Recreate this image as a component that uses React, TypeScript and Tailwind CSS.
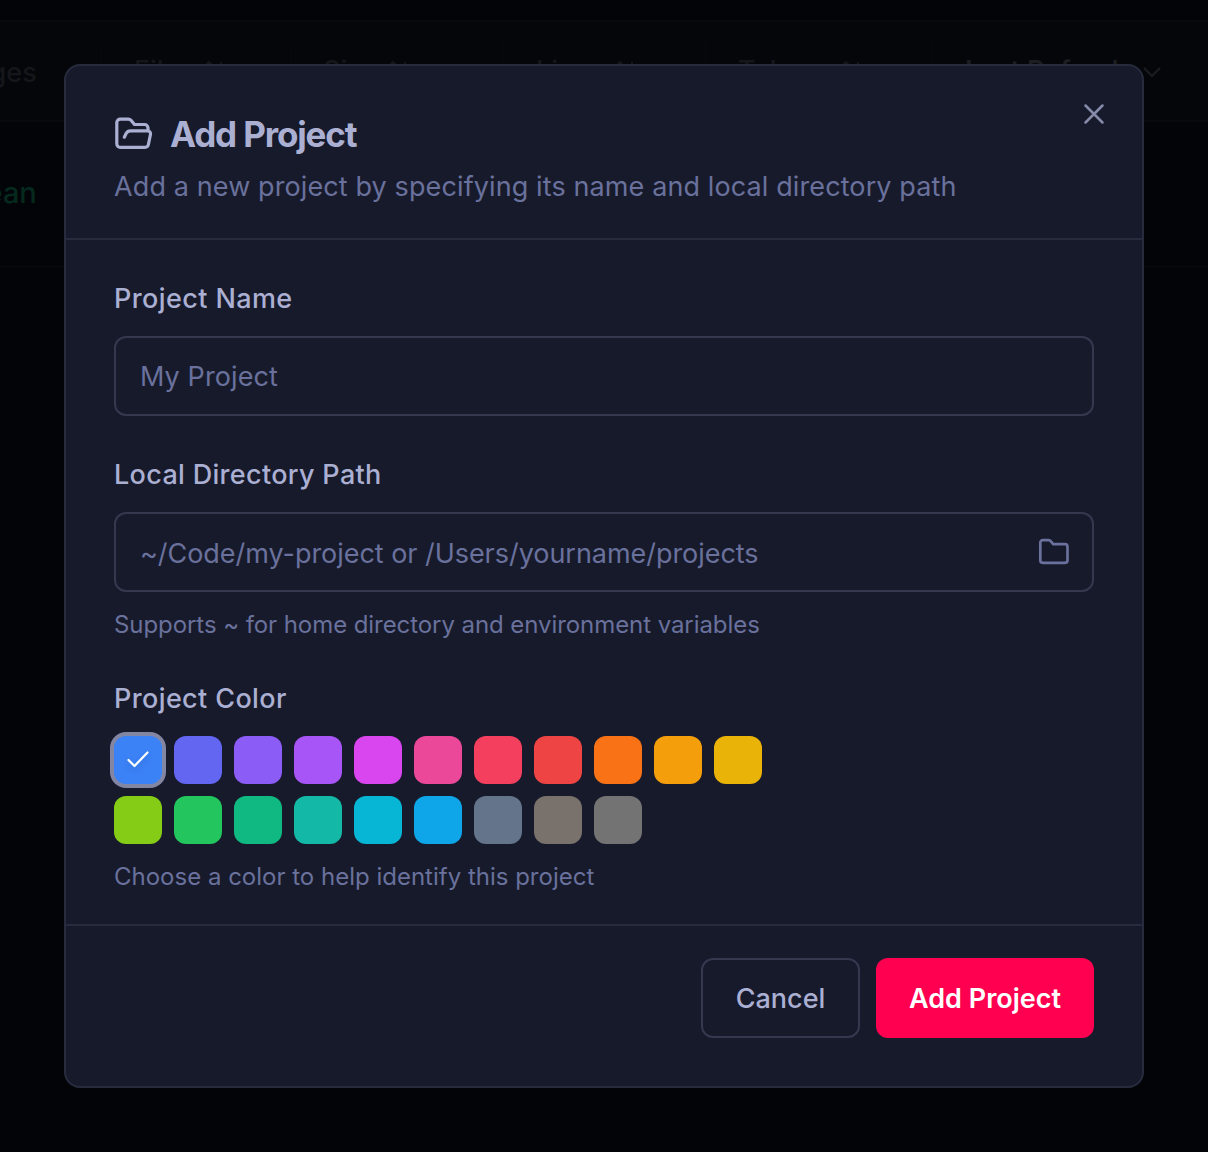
import React, { useState } from "react";

const COLORS = [
  "#3b82f6", "#6366f1", "#8b5cf6", "#a855f7", "#d946ef", "#ec4899", "#f43f5e",
  "#ef4444", "#f97316", "#f59e0b", "#eab308", "#84cc16", "#22c55e", "#10b981",
  "#14b8a6", "#06b6d4", "#0ea5e9", "#64748b", "#78716c", "#737373",
];

function FolderOpenIcon() {
  return (
    <svg width="40" height="36" viewBox="0 0 40 36" fill="none" stroke="currentColor" strokeWidth="3.2" strokeLinecap="round" strokeLinejoin="round">
      <path d="M34 15V12A3.500 3.500 0 0 0 30.500 8.500H20.500L17 4.300A3.500 3.500 0 0 0 14.300 3.100H6.300A3.500 3.500 0 0 0 2.800 6.600V27.800A3.500 3.500 0 0 0 6.300 31.300H31A3.500 3.500 0 0 0 34.400 28.500L36.500 18.200A2.700 2.700 0 0 0 33.800 14.900H16.700A5 5 0 0 0 12.100 17.500L10.300 21.200" />
    </svg>
  );
}

function FolderIcon() {
  return (
    <svg width="32" height="28" viewBox="0 0 32 28" fill="none" stroke="currentColor" strokeWidth="2.7" strokeLinejoin="round">
      <path d="M2.300 4.500A2.300 2.300 0 0 1 4.600 2.200H10.500A3 3 0 0 1 12.900 3.300L15.200 6.200H27A2.500 2.500 0 0 1 29.500 8.700V22.300A2.500 2.500 0 0 1 27 24.800H4.800A2.500 2.500 0 0 1 2.300 22.300Z" />
    </svg>
  );
}

function HeaderCell({ label, className }: { label: string; className: string }) {
  return (
    <div className={`flex h-[60px] items-center gap-2.5 border-l border-[#07080b] pl-8 text-[27px] font-medium text-[#15161b] ${className}`}>
      <span className="whitespace-nowrap">{label}</span>
      <svg className="shrink-0" width="20" height="22" viewBox="0 0 20 22" fill="none" stroke="currentColor" strokeWidth="2">
        <path d="M1 6L5 2L9 6M5 2V20M17 2V20M13 16L17 20" />
      </svg>
    </div>
  );
}

function Backdrop() {
  return (
    <div className="h-[1152px] w-[1208px] overflow-hidden bg-[#030408]">
      <div className="h-5" />
      <div className="flex h-[102px] items-center border-y-2 border-[#08090c] bg-[#050609]">
        <div className="flex w-[101px] justify-start text-[27px] font-medium text-[#15161b]">
          <span className="-ml-[78px] mt-1">Changes</span>
        </div>
        <HeaderCell label="Files" className="w-[189px]" />
        <HeaderCell label="Size" className="w-[213px]" />
        <HeaderCell label="Lines" className="w-[202px]" />
        <HeaderCell label="Tokens" className="w-[227px]" />
        <div className="flex h-[60px] flex-1 items-center border-l border-[#07080b] pl-8 text-[27px] font-semibold text-[#1c1d21]">
          <span className="w-[178px] whitespace-nowrap">Last Refresh</span>
          <svg className="mt-0.5 shrink-0" width="18" height="12" viewBox="0 0 18 12" fill="none" stroke="currentColor" strokeWidth="2.2">
            <path d="M1 2L9 10L17 2" />
          </svg>
        </div>
      </div>
      <div className="flex h-[145px] items-center border-b border-[#090a0e] text-[29px] font-medium text-[#06291e]">
        <span className="-ml-[43px] -mt-0.5">Clean</span>
      </div>
    </div>
  );
}

export default function App() {
  const [selected, setSelected] = useState(0);
  return (
    <div className="relative h-[1152px] w-[1208px] overflow-hidden font-['Inter',sans-serif]">
      <Backdrop />
      <div className="absolute inset-0 flex items-center justify-center">
        <div role="dialog" className="relative flex h-[1024px] w-[1080px] flex-col rounded-2xl border-2 border-[#282b3d] bg-[#171a2b] text-[#abb0d3]">
          <header className="h-[174px] shrink-0 border-b-2 border-[#282b3d] px-12 pt-[46px]">
            <div className="flex h-11 items-center gap-4">
              <FolderOpenIcon />
              <h2 className="text-[35px] font-bold leading-[44px] tracking-[-1.15px]">Add Project</h2>
            </div>
            <p className="mt-[11px] whitespace-nowrap text-[27px] leading-10 tracking-[0.11px] text-[#69719c]">Add a new project by specifying its name and local directory path</p>
          </header>
          <button aria-label="Close" className="absolute right-[37px] top-[37px] text-[#868ba9]">
            <svg width="22" height="22" viewBox="0 0 22 22" fill="none" stroke="currentColor" strokeWidth="2.5" strokeLinecap="round">
              <path d="M2.500 2.500L19.500 19.500M19.500 2.500L2.500 19.500" />
            </svg>
          </button>

          <main className="h-[686px] shrink-0 border-b-2 border-[#282b3d] px-12 pt-[41px]">
            <label className="block text-[27px] font-[550] leading-9 tracking-[0.4px]">Project Name</label>
            <div className="mt-[19px] flex h-20 items-center rounded-xl border-2 border-[#35384f] px-6 pt-[3px] text-[27px] tracking-[0.1px] text-[#69719c]">
              <span>My Project</span>
            </div>
            <label className="mt-[41px] block text-[27px] font-[550] leading-9 tracking-[0.32px]">Local Directory Path</label>
            <div className="mt-[19px] flex h-20 items-center justify-between rounded-xl border-2 border-[#35384f] pl-6 pr-[22px] text-[27px] tracking-[-0.04px] text-[#69719c]">
              <span className="mt-1">~/Code/my-project or /Users/yourname/projects</span>
              <FolderIcon />
            </div>
            <p className="mt-[17px] text-[24px] leading-8 tracking-[-0.07px] text-[#69719c]">Supports ~ for home directory and environment variables</p>
            <label className="mt-10 block text-[27px] font-[550] leading-9 tracking-[0.38px]">Project Color</label>
            <div className="mt-[19px] flex w-[660px] flex-wrap gap-3">
              {COLORS.map((color, i) => (
                <button
                  key={color}
                  aria-label={color}
                  onClick={() => setSelected(i)}
                  className={`flex size-12 items-center justify-center rounded-xl ${i === selected ? "ring-4 ring-[#8286a2]" : ""}`}
                  style={{ backgroundColor: color }}
                >
                  {i === selected && (
                    <svg className="-mt-0.5 drop-shadow-md" width="24" height="20" viewBox="0 0 24 20" fill="none" stroke="white" strokeWidth="2.2" strokeLinecap="round" strokeLinejoin="round">
                      <path d="M2.500 11L8.500 17L21.500 3.500" />
                    </svg>
                  )}
                </button>
              ))}
            </div>
            <p className="mt-[17px] text-[24px] leading-8 text-[#69719c]">Choose a color to help identify this project</p>
          </main>

          <footer className="flex justify-end gap-4 px-12 pt-8 text-[27px] font-semibold">
            <button className="h-20 w-[159px] rounded-xl border-2 border-[#35384f] pt-0.5 font-[550]">Cancel</button>
            <button className="h-20 w-[218px] rounded-xl bg-[#ff0050] pt-0.5 text-white">Add Project</button>
          </footer>
        </div>
      </div>
    </div>
  );
}
